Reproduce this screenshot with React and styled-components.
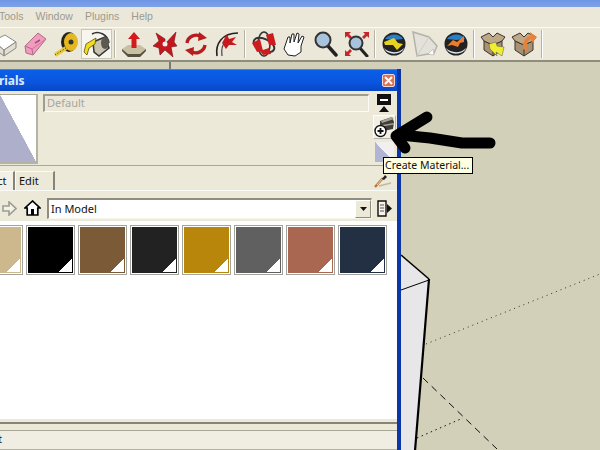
import styled, { createGlobalStyle } from "styled-components";

const GlobalStyle = createGlobalStyle`
  html, body {
    margin: 0;
    padding: 0;
    width: 600px;
    height: 450px;
    overflow: hidden;
    background: #d3d0b9;
    font-family: "Noto Sans", "Liberation Sans", sans-serif;
  }
`;

const Page = styled.div`
  position: relative;
  display: flex;
  flex-direction: column;
  width: 600px;
  height: 450px;
  overflow: hidden;
`;

const TitleStrip = styled.div`
  height: 7px;
  background: linear-gradient(#6f97e6, #7fa2e8);
`;

const MenuBar = styled.div`
  display: flex;
  align-items: center;
  gap: 12px;
  height: 21px;
  padding-bottom: 2px;
  box-sizing: border-box;
  margin-left: -1px;
  background: #ebe8da;
  border-bottom: 1px solid #fbfbf6;
  font-family: "Liberation Sans", sans-serif;
  font-size: 10.5px;
  color: #9c9a90;
`;

const Toolbar = styled.div`
  display: flex;
  align-items: center;
  height: 32px;
  background: #ebe8da;
  border-bottom: 2px solid #8f8d7e;
  margin-left: -12px;
  padding-right: 12px;
`;

const ToolCell = styled.div`
  display: flex;
  align-items: center;
  justify-content: center;
  box-sizing: border-box;
  width: 31px;
  height: 30px;
  background: ${(p) => (p.$active ? "#f6f5ee" : "transparent")};
  border: 1px solid ${(p) => (p.$active ? "#c9c7b8" : "transparent")};
`;

const ToolSep = styled.div`
  width: 2px;
  height: 28px;
  margin: 0 2px;
  background: #b5b3a5;
  border-right: 1px solid #fff;
  box-sizing: border-box;
`;

const Viewport = styled.div`
  position: relative;
  flex: 1;
  background: #d3d0b9;
`;

const SceneLines = styled.svg`
  position: absolute;
  left: 0;
  top: -61px;
  width: 600px;
  height: 450px;
`;

const MaterialsWindow = styled.div`
  position: absolute;
  left: -34px;
  top: 7px;
  box-sizing: border-box;
  display: flex;
  flex-direction: column;
  width: 435px;
  height: 400px;
  background: #ece9d8;
  border-right: 4px solid #0a36a9;
`;

const TitleBar = styled.div`
  display: flex;
  align-items: center;
  justify-content: space-between;
  height: 22px;
  padding: 0 2px;
  background: linear-gradient(#0a5fe8, #0a55de 60%, #0747c4);
  border-top: 1px solid #3d86ef;
  box-sizing: border-box;
  color: #dfeaff;
  font-size: 12px;
  font-weight: 700;
`;

const CloseButton = styled.div`
  display: flex;
  align-items: center;
  justify-content: center;
  box-sizing: border-box;
  width: 13px;
  height: 13px;
  border: 1px solid #f4d6cf;
  border-radius: 2px;
  background: #d9735a;
`;

const PreviewRow = styled.div`
  display: flex;
  height: 75px;
  box-sizing: border-box;
  padding: 3px 0 0 33px;
  border-bottom: 1px solid #aaa896;
`;

const PreviewSwatch = styled.div`
  flex: none;
  box-sizing: border-box;
  width: 39px;
  height: 70px;
  border: 1px solid #a8a694;
  border-right: 2px solid #b5b3a3;
  border-bottom: 2px solid #b5b3a3;
  background: linear-gradient(to top right, #aeb0cb 50%, #ffffff 50.5%);
`;

const NameField = styled.div`
  flex: none;
  box-sizing: border-box;
  width: 326px;
  height: 18px;
  margin-left: 5px;
  padding-left: 2px;
  border-left: 2px solid #9f9d8d;
  border-top: 2px solid #9f9d8d;
  border-bottom: 1px solid #fbfbf6;
  border-right: 1px solid #fbfbf6;
  font-size: 11px;
  line-height: 13px;
  color: #a8a69b;
  background: #ebe8da;
`;

const SideTools = styled.div`
  flex: none;
  display: flex;
  flex-direction: column;
  align-items: center;
  gap: 2px;
  width: 24px;
  margin-left: 3px;
`;

const RaisedTool = styled.div`
  display: flex;
  align-items: center;
  justify-content: center;
  box-sizing: border-box;
  width: 23px;
  height: 24px;
  background: #f2f0e6;
  border: 1px solid #fff;
  border-right-color: #b5b3a5;
  border-bottom-color: #b5b3a5;
`;

const PairSwatch = styled.div`
  width: 19px;
  height: 20px;
  margin-top: 1px;
  background: linear-gradient(to top right, #b2b4d4 50%, #f1f0ee 50.5%);
`;

const TabRow = styled.div`
  display: flex;
  align-items: flex-end;
  justify-content: space-between;
  height: 25px;
  box-sizing: border-box;
  padding-right: 5px;
  border-bottom: 1px solid #fbfbf6;
`;

const Tabs = styled.div`
  display: flex;
  align-items: flex-end;
`;

const Tab = styled.div`
  box-sizing: border-box;
  width: ${(p) => p.$width}px;
  height: 19px;
  padding-left: ${(p) => (p.$selected ? 9 : 3)}px;
  font-size: 11px;
  line-height: 18px;
  color: #111;
  background: ${(p) => (p.$selected ? "#f3f1e7" : "#ece9d8")};
  border-top: 1px solid #fbfbf6;
  border-left: 1px solid #fbfbf6;
  border-right: 2px solid #85837a;
`;

const TabTool = styled.div`
  display: flex;
  margin-bottom: 2px;
`;

const NavRow = styled.div`
  display: flex;
  align-items: center;
  height: 30px;
  box-sizing: border-box;
  padding: 4px 0 0 34px;
`;

const NavIcon = styled.div`
  flex: none;
  display: flex;
  align-items: center;
  justify-content: center;
  width: ${(p) => p.$width}px;
`;

const SelectBox = styled.div`
  flex: none;
  display: flex;
  align-items: center;
  justify-content: space-between;
  box-sizing: border-box;
  width: 325px;
  height: 21px;
  background: #fff;
  border-left: 2px solid #8f8d80;
  border-top: 2px solid #8f8d80;
  border-right: 1px solid #f6f5ee;
  border-bottom: 1px solid #f6f5ee;
  padding-left: 2px;
  font-size: 11px;
  color: #111;
`;

const DropButton = styled.div`
  display: flex;
  align-items: center;
  justify-content: center;
  width: 16px;
  height: 18px;
  background: #ece9d8;
  border-left: 1px solid #fff;
  border-top: 1px solid #fff;
  border-right: 1px solid #8f8d80;
  border-bottom: 1px solid #8f8d80;
  box-sizing: border-box;
`;

const SwatchList = styled.div`
  display: flex;
  align-items: flex-start;
  gap: 3px;
  height: 198px;
  box-sizing: border-box;
  padding: 4px 0 0 8px;
  background: #fff;
`;

const Swatch = styled.div`
  position: relative;
  flex: none;
  box-sizing: border-box;
  width: 49px;
  height: 50px;
  background: ${(p) => p.$color};
  border: 1px solid #a3a39d;
  box-shadow: inset 0 0 0 1px #fff;

  &::after {
    content: "";
    position: absolute;
    right: 2px;
    bottom: 2px;
    width: 13px;
    height: 13px;
    background: linear-gradient(to top left, #fff 50%, transparent 52%);
  }
`;

const Sash = styled.div`
  height: 9px;
  box-sizing: border-box;
  margin-top: 3px;
  border-top: 2px solid #86857a;
  border-bottom: 1px solid #a9a797;
`;

const StatusRow = styled.div`
  height: 19px;
  box-sizing: border-box;
  background: #f0eee2;
  border-bottom: 1px solid #b5b3a5;
  font-size: 10.5px;
  line-height: 17px;
  color: #111;
`;

const Overlay = styled.svg`
  position: absolute;
  left: 0;
  top: 0;
  width: 600px;
  height: 450px;
`;

const Tooltip = styled.div`
  position: absolute;
  left: 383px;
  top: 157px;
  box-sizing: border-box;
  width: 90px;
  height: 17px;
  padding-left: 1px;
  background: #ffffe1;
  border: 1px solid #000;
  font-size: 10.5px;
  line-height: 15px;
  white-space: nowrap;
  color: #111;
`;

const Cube = () => (
  <svg width="26" height="26" viewBox="0 0 26 26">
    <path d="M2 10 L14 4 L25 11 L13 19Z" fill="#fff" stroke="#8a8a80" />
    <path d="M2 10 V17 L13 25 V19Z M25 11 V17 L13 25 V19Z" fill="#e2e0d6" stroke="#8a8a80" />
  </svg>
);

const Eraser = () => (
  <svg width="24" height="26" viewBox="0 0 24 26">
    <path d="M2 15 L15 2 L23 8 L10 24 L3 22Z" fill="#f29ac0" stroke="#a8707f" />
    <path d="M2 15 L9 18 L10 24" fill="none" stroke="#b56a88" />
    <path d="M9 18 L23 8" stroke="#c97a9c" />
    <path d="M12 12 L17 9" stroke="#a8506f" strokeWidth="1.5" />
  </svg>
);

const TapeMeasure = () => (
  <svg width="26" height="26" viewBox="0 0 26 26">
    <ellipse cx="16" cy="11" rx="8" ry="10" fill="#222" />
    <ellipse cx="18" cy="11" rx="7" ry="9" fill="#e5b81f" />
    <circle cx="18" cy="11" r="2.5" fill="#333" />
    <path d="M13 17 L2 24" stroke="#e5c93a" strokeWidth="4" />
    <path d="M13 17 L2 24" stroke="#333" strokeWidth="1" strokeDasharray="1 2" />
  </svg>
);

const PaintBucket = () => (
  <svg width="28" height="26" viewBox="0 0 28 26">
    <path d="M9 3 C16 -1 25 4 26 12" fill="none" stroke="#333" strokeWidth="1.5" />
    <path d="M10 11 L22 6 L26 17 L16 25 L11 21Z" fill="#c8c4b0" stroke="#333" strokeWidth="1.5" />
    <ellipse cx="22" cy="12" rx="4" ry="6" fill="#5c5a50" />
    <path d="M13 7 L3 13 L1 21 L4 24 L6 17 L12 13Z" fill="#f2dc1e" stroke="#59500a" strokeWidth="0.8" />
  </svg>
);

const PushPull = () => (
  <svg width="26" height="26" viewBox="0 0 26 26">
    <path d="M1 18 L7 14 H19 L25 18 L19 23 H7Z" fill="#c9bfa3" />
    <path d="M1 18 L7 23 H19 L25 18 V20 L19 26 H7 L1 20Z" fill="#55503f" />
    <path d="M13 1 L19 8 H15.5 V17 H10.5 V8 H7Z" fill="#d41a1a" />
  </svg>
);

const MoveTool = () => (
  <svg width="26" height="26" viewBox="0 0 26 26">
    <path d="M13 13 L24 1 L22 11 L25 15 L19 16 L21 26 L13 19 L8 24 L7 17 L1 15 L7 10 L4 2 L13 8Z" fill="#c4171d" stroke="#6e1014" strokeWidth="0.6" />
    <circle cx="13" cy="13" r="2.5" fill="#eee" />
  </svg>
);

const RotateTool = () => (
  <svg width="24" height="26" viewBox="0 0 24 26">
    <path d="M3 12 C4 5 12 2 18 6" fill="none" stroke="#b81c1e" strokeWidth="3.4" />
    <path d="M15 1 L23 7 L14 10Z" fill="#b81c1e" />
    <path d="M21 14 C20 21 12 24 6 20" fill="none" stroke="#b81c1e" strokeWidth="3.4" />
    <path d="M9 25 L1 19 L10 16Z" fill="#b81c1e" />
  </svg>
);

const OffsetTool = () => (
  <svg width="26" height="26" viewBox="0 0 26 26">
    <path d="M3 25 C1 13 8 2 24 2" fill="none" stroke="#222" strokeWidth="1.6" />
    <path d="M8 25 C7 18 9 13 12 11" fill="none" stroke="#444" strokeWidth="1.2" />
    <path d="M8 12 L13 3 L15 8 L22 6 L18 11 L23 14 L15 14 L12 18Z" fill="#c8191f" />
  </svg>
);

const OrbitTool = () => (
  <svg width="26" height="26" viewBox="0 0 26 26">
    <ellipse cx="13" cy="14" rx="11" ry="6" fill="none" stroke="#333" strokeWidth="2" transform="rotate(25 13 14)" />
    <ellipse cx="13" cy="13" rx="6" ry="12" fill="none" stroke="#333" strokeWidth="1.6" />
    <path d="M1 12 L9 8 L12 20 L6 21Z" fill="#cc1c20" />
    <path d="M15 4 L22 2 L25 14 L18 14Z" fill="#cc1c20" />
    <path d="M9 20 L18 17 L20 23 L12 24Z" fill="#cc1c20" />
  </svg>
);

const HandTool = () => (
  <svg width="26" height="26" viewBox="0 0 26 26">
    <path d="M2 18 L6 6 L8 6 L8 12 L10 3 L12 3 L12 11 L15 2 L17 3 L16 12 L20 5 L22 6 L19 15 L19 21 L13 25 L6 24Z" fill="#fff" stroke="#222" />
  </svg>
);

const ZoomTool = () => (
  <svg width="24" height="26" viewBox="0 0 24 26">
    <path d="M14 15 L22 24" stroke="#222" strokeWidth="3.4" strokeLinecap="round" />
    <circle cx="9" cy="9" r="7.5" fill="#a9c3dc" stroke="#333" strokeWidth="2" />
  </svg>
);

const ZoomExtents = () => (
  <svg width="26" height="26" viewBox="0 0 26 26">
    <path d="M1 1 H7 L5 3 L8 6 L6 8 L3 5 L1 7Z M25 1 H19 L21 3 L18 6 L20 8 L23 5 L25 7Z M1 25 V19 L3 21 L6 18 L8 20 L5 23 L7 25Z" fill="#c3272b" />
    <path d="M16 17 L23 25" stroke="#222" strokeWidth="3" strokeLinecap="round" />
    <circle cx="12" cy="12" r="6.5" fill="#a9c3dc" stroke="#333" strokeWidth="2" />
  </svg>
);

const GlobeIcon = ({ color, flip }) => (
  <svg width="24" height="26" viewBox="0 0 24 26">
    <circle cx="12" cy="13" r="11.5" fill="#222" />
    <path d="M2 17 C6 22 17 23 22 17 C20 24 5 25 2 17Z" fill="#dfe9f0" />
    <path d="M3 8 C7 2 18 2 21 8 L12 9Z" fill="#2a7fc4" />
    {flip ? (
      <path d="M3 15 L9 9 L13 11 L20 5 L20 11 L16 12 L14 16 L8 14Z" fill={color} />
    ) : (
      <path d="M2 11 L12 7 L16 12 L21 13 L15 19 L11 14 L3 14Z" fill={color} />
    )}
  </svg>
);

const PolygonFaded = () => (
  <svg width="26" height="26" viewBox="0 0 26 26">
    <path d="M1 1 L17 6 L25 15 L22 22 L5 25Z" fill="#e3e1d9" stroke="#b4b3a8" strokeWidth="1.5" />
    <path d="M5 25 L17 6" stroke="#cfcdc3" />
    <path d="M16 23 L21 18 L22 24Z" fill="#fff" stroke="#aaa" strokeWidth="0.6" />
  </svg>
);

const BoxIcon = ({ up }) => (
  <svg width="26" height="26" viewBox="0 0 26 26">
    <path d="M4 10 L13 14 L22 10 L22 19 L13 25 L4 19Z" fill="#a79274" stroke="#3b3428" />
    <path d="M13 14 V25" stroke="#3b3428" />
    <path d="M4 10 L1 6 L9 2 L13 6 L17 2 L25 6 L22 10 L13 14Z" fill="#bda888" stroke="#3b3428" />
    {up ? (
      <path d="M12 18 C11 9 16 5 20 5 L19 1 L26 6 L21 12 L20 8 C17 9 15 13 16 20Z" fill="#e8823a" />
    ) : (
      <path d="M9 13 L16 11 L17 15 L24 16 L22 25 L16 21 L17 25 L10 18Z" fill="#f0ee30" stroke="#555" strokeWidth="0.5" />
    )}
  </svg>
);

const CloseGlyph = () => (
  <svg width="9" height="9" viewBox="0 0 9 9">
    <path d="M1 1 L8 8 M8 1 L1 8" stroke="#fff" strokeWidth="2" />
  </svg>
);

const ExpandIcon = () => (
  <svg width="14" height="19" viewBox="0 0 14 19">
    <rect x="0" y="0" width="14" height="11" fill="#111" />
    <rect x="3" y="5" width="8" height="2" fill="#fff" />
    <path d="M7 12 L12 18 H2Z" fill="#111" />
  </svg>
);

const CreateIcon = () => (
  <svg width="21" height="22" viewBox="0 0 21 22">
    <path d="M6 5 L18 1 L20 6 L19 13 L9 15 L6 10Z" fill="#3f3d36" />
    <path d="M7 5 L18 1 L20 3 L8 7Z M8 9 L20 7 L20 8.5 L8 10.5Z" fill="#a5a393" />
    <circle cx="6.5" cy="15" r="5.5" fill="#fff" stroke="#111" strokeWidth="1.4" />
    <path d="M6.5 12 V18 M3.5 15 H9.5" stroke="#111" strokeWidth="1.8" />
  </svg>
);

const Eyedropper = () => (
  <svg width="18" height="14" viewBox="0 0 18 14">
    <path d="M1 13 L9 4" stroke="#b9763c" strokeWidth="2.4" />
    <path d="M3 11 L8 5" stroke="#f3e3cf" strokeWidth="0.8" />
    <path d="M8 5 L11 1 L13 3 L10 6Z" fill="#222" />
    <path d="M5 12 L17 9" stroke="#bdbaa7" strokeWidth="1.4" />
  </svg>
);

const BackArrow = () => (
  <svg width="15" height="15" viewBox="0 0 15 15">
    <path d="M1 5 H7 V1 L14 7.5 L7 14 V10 H1Z" fill="#f3f1e8" stroke="#9d9c92" strokeWidth="1.6" />
  </svg>
);

const HomeIcon = () => (
  <svg width="17" height="16" viewBox="0 0 17 16">
    <path d="M8.5 1 L1 8 H3.2 V15 H13.8 V8 H16Z" fill="#fff" stroke="#000" strokeWidth="1.7" />
    <rect x="7" y="9" width="3" height="6" fill="#000" />
  </svg>
);

const DownArrow = () => (
  <svg width="7" height="4" viewBox="0 0 7 4">
    <path d="M0 0 H7 L3.5 4Z" fill="#111" />
  </svg>
);

const DetailsIcon = () => (
  <svg width="15" height="17" viewBox="0 0 15 17">
    <path d="M1 1 H9 V16 H1Z" fill="#f4f2ea" stroke="#111" strokeWidth="1.4" />
    <path d="M3 5 H7 M3 8 H7 M3 11 H7" stroke="#555" />
    <path d="M10 4 L15 8.5 L10 13Z" fill="#111" />
  </svg>
);

const SWATCHES = ["#cdb88d", "#000000", "#7a5a37", "#222222", "#b8860b", "#606060", "#a96751", "#233044"];

export default function App() {
  return (
    <>
      <GlobalStyle />
      <Page>
        <TitleStrip />
        <MenuBar>
          <span>Tools</span>
          <span>Window</span>
          <span>Plugins</span>
          <span>Help</span>
        </MenuBar>
        <Toolbar>
          <ToolCell><Cube /></ToolCell>
          <ToolCell><Eraser /></ToolCell>
          <ToolCell><TapeMeasure /></ToolCell>
          <ToolCell $active><PaintBucket /></ToolCell>
          <ToolSep />
          <ToolCell><PushPull /></ToolCell>
          <ToolCell><MoveTool /></ToolCell>
          <ToolCell><RotateTool /></ToolCell>
          <ToolCell><OffsetTool /></ToolCell>
          <ToolSep />
          <ToolCell><OrbitTool /></ToolCell>
          <ToolCell><HandTool /></ToolCell>
          <ToolCell><ZoomTool /></ToolCell>
          <ToolCell><ZoomExtents /></ToolCell>
          <ToolSep />
          <ToolCell><GlobeIcon color="#e9d21f" /></ToolCell>
          <ToolCell><PolygonFaded /></ToolCell>
          <ToolCell><GlobeIcon color="#ee7a2a" flip /></ToolCell>
          <ToolSep />
          <ToolCell><BoxIcon /></ToolCell>
          <ToolCell><BoxIcon up /></ToolCell>
          <ToolSep />
        </Toolbar>
        <Viewport>
          <SceneLines viewBox="0 0 600 450">
            <path d="M401 254 L429 278 L415 450 H401Z" fill="#e7e7e9" />
            <path d="M170 61 V68" stroke="#223" strokeWidth="1" />
            <path d="M401 254 L429 278" stroke="#000" strokeWidth="1.6" />
            <path d="M429 278 L415 450" stroke="#000" strokeWidth="2.2" />
            <path d="M401 289 L429 279" stroke="#000" strokeWidth="1" />
            <path d="M426 343 L600 273" stroke="#3a2a22" strokeWidth="1" strokeDasharray="1 4" />
            <path d="M423 377 L497 448" stroke="#111" strokeWidth="1" strokeDasharray="7 5" />
            <path d="M417 437 L463 417" stroke="#111" strokeWidth="1" strokeDasharray="1.5 3.5" />
          </SceneLines>
          <MaterialsWindow>
            <TitleBar>
              <span>Materials</span>
              <CloseButton><CloseGlyph /></CloseButton>
            </TitleBar>
            <PreviewRow>
              <PreviewSwatch />
              <NameField>Default</NameField>
              <SideTools>
                <ExpandIcon />
                <RaisedTool><CreateIcon /></RaisedTool>
                <PairSwatch />
              </SideTools>
            </PreviewRow>
            <TabRow>
              <Tabs>
                <Tab $width={49} $selected>Select</Tab>
                <Tab $width={40}>Edit</Tab>
              </Tabs>
              <TabTool><Eyedropper /></TabTool>
            </TabRow>
            <NavRow>
              <NavIcon $width={18}><BackArrow /></NavIcon>
              <NavIcon $width={29}><HomeIcon /></NavIcon>
              <SelectBox>
                <span>In Model</span>
                <DropButton><DownArrow /></DropButton>
              </SelectBox>
              <NavIcon $width={25}><DetailsIcon /></NavIcon>
            </NavRow>
            <SwatchList>
              {SWATCHES.map((color) => (
                <Swatch key={color} $color={color} />
              ))}
            </SwatchList>
            <Sash />
            <StatusRow>Default</StatusRow>
          </MaterialsWindow>
        </Viewport>
        <Overlay viewBox="0 0 600 450">
          <path
            d="M490 143 L462 143 L430 138 L400 135 M427 117 L396 136 L405 148"
            fill="none"
            stroke="#000"
            strokeWidth="11"
            strokeLinecap="round"
            strokeLinejoin="round"
          />
        </Overlay>
        <Tooltip>Create Material...</Tooltip>
      </Page>
    </>
  );
}
